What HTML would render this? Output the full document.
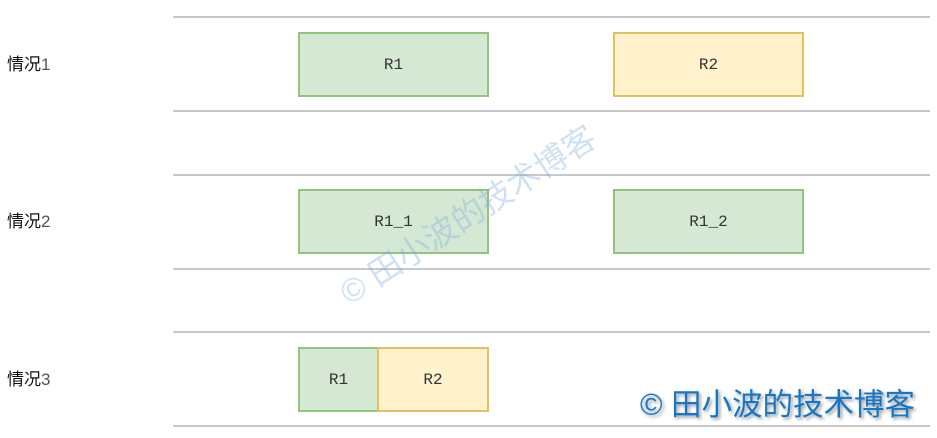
<!DOCTYPE html><html><head><style>
body{margin:0;width:937px;height:438px;background:#fff;position:relative;overflow:hidden;font-family:"Liberation Sans","Noto Sans CJK SC",sans-serif}
.l{position:absolute;left:173px;width:757px;height:2px;background:#c8c8c8}
.b{position:absolute;box-sizing:border-box;border:2px solid;display:flex;align-items:center;justify-content:center;font-family:"Liberation Mono",monospace;font-size:16px;color:#333}
.g{background:#d5e8d4;border-color:#93c47d}
.y{background:#fff2cc;border-color:#e0c060}
.t{position:absolute;left:7px;font-size:17px;color:#111}
.t span{color:#555}
</style></head><body>
<div class="l" style="top:16px"></div><div class="l" style="top:110px"></div>
<div class="l" style="top:174px"></div><div class="l" style="top:268px"></div>
<div class="l" style="top:331px"></div><div class="l" style="top:425px"></div>
<div class="t" style="top:50px">情况<span>1</span></div>
<div class="t" style="top:207px">情况<span>2</span></div>
<div class="t" style="top:365px">情况<span>3</span></div>
<div class="b g" style="left:298px;top:32px;width:191px;height:65px">R1</div>
<div class="b y" style="left:613px;top:32px;width:191px;height:65px">R2</div>
<div class="b g" style="left:298px;top:189px;width:191px;height:65px">R1_1</div>
<div class="b g" style="left:613px;top:189px;width:191px;height:65px">R1_2</div>
<div class="b g" style="left:298px;top:347px;width:81px;height:65px">R1</div>
<div class="b y" style="left:377px;top:347px;width:112px;height:65px">R2</div>
<div style="position:absolute;left:468px;top:215px;font-size:33px;line-height:1;color:rgba(120,170,220,0.35);transform:translate(-50%,-50%) rotate(-33deg);white-space:nowrap">© 田小波的技术博客</div>
<div style="position:absolute;left:640px;top:387px;font-size:30.5px;line-height:36px;color:#1677c8;text-shadow:2px 2px 3px #999;white-space:nowrap">© 田小波的技术博客</div>
</body></html>
